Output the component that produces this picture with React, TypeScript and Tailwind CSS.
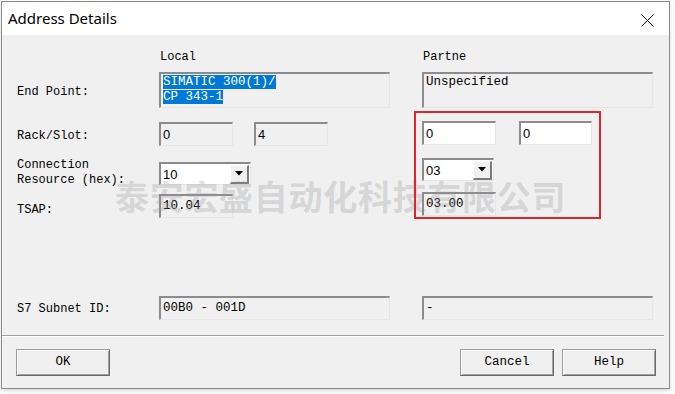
import React from "react";

const mono = { fontFamily: '"Liberation Mono", "DejaVu Sans Mono", monospace' };
const sans = { fontFamily: '"Liberation Sans", Arial, sans-serif' };

function Sunken({
  className = "",
  white = false,
  children,
}: {
  className?: string;
  white?: boolean;
  children?: React.ReactNode;
}) {
  return (
    <div
      className={`box-border border-t-2 border-l-2 border-b border-r border-t-[#8c8c8c] border-l-[#8c8c8c] border-b-[#e6e6e6] border-r-[#e6e6e6] ${
        white ? "bg-white" : "bg-[#f0f0f0]"
      } ${className}`}
    >
      {children}
    </div>
  );
}

function Combo({ value, width }: { value: string; width: string }) {
  return (
    <Sunken white className={`${width} h-[23px] flex items-center justify-between pr-[1px]`}>
      <span className="pl-[2px] text-[13px] text-black leading-none" style={sans}>
        {value}
      </span>
      <div className="w-[19px] h-[19px] bg-[#f0f0f0] box-border border-t border-l border-white border-b-2 border-r-2 border-b-[#7a7a7a] border-r-[#7a7a7a] flex items-center justify-center">
        <svg width="8" height="5" viewBox="0 0 8 5">
          <polygon points="0,0 8,0 4,4.5" fill="#000" />
        </svg>
      </div>
    </Sunken>
  );
}

function Btn({ label }: { label: string }) {
  return (
    <div className="w-[94px] h-[27px] box-border bg-[#f0f0f0] border border-t-[#9a9a9a] border-l-[#9a9a9a] border-b-[#6a6a6a] border-r-[#6a6a6a] flex items-center justify-center shadow-[inset_1px_1px_0_#ffffff,inset_-1px_-1px_0_#a0a0a0]">
      <span className="text-[12.5px] text-black" style={mono}>
        {label}
      </span>
    </div>
  );
}

export default function App() {
  return (
    <div className="w-[675px] h-[394px] bg-white relative overflow-hidden">
      <div className="absolute left-[1px] top-[1px] w-[669px] h-[388px] border border-[#8a8a8a] bg-[#f0f0f0] shadow-[0_2px_4px_rgba(0,0,0,0.15)] flex flex-col">
        {/* title bar */}
        <div className="h-[33px] bg-white flex items-center justify-between pl-[6px] pr-[15px] shrink-0">
          <span
            className="text-[15px] text-black leading-none"
            style={{ fontFamily: '"Noto Sans", "Open Sans", sans-serif' }}
          >
            Address Details
          </span>
          <svg width="13" height="13" viewBox="0 0 13 13" className="mt-[4px]">
            <path d="M0.5 0.5 L12.5 12.5 M12.5 0.5 L0.5 12.5" stroke="#111" strokeWidth="1" />
          </svg>
        </div>

        {/* body */}
        <div className="flex flex-col pl-[15px] text-black" style={mono}>
          {/* header */}
          <div className="mt-[15px] h-[14px] flex text-[12px] leading-[14px]">
            <div className="w-[143px]" />
            <div className="w-[263px]">Local</div>
            <div>Partne</div>
          </div>

          {/* End point */}
          <div className="mt-[8px] h-[36px] flex items-center">
            <div className="w-[142px] text-[12px] pt-[3px]">End Point:</div>
            <Sunken className="w-[231px] h-[36px] pl-[2px] pt-[1px]">
              <div className="text-[12.5px] leading-[15px]">
                <span className="bg-[#0078d7] text-white">SIMATIC 300(1)/</span>
                <br />
                <span className="bg-[#0078d7] text-white">CP 343-1</span>
              </div>
            </Sunken>
            <div className="w-[32px]" />
            <Sunken className="w-[231px] h-[36px] pl-[2px] pt-[1px]">
              <div className="text-[12.5px] leading-[15px]">Unspecified</div>
            </Sunken>
          </div>

          {/* Rack/Slot */}
          <div className="mt-[14px] h-[24px] flex items-center">
            <div className="w-[142px] text-[12px] pt-[3px]">Rack/Slot:</div>
            <Sunken className="w-[74px] h-[24px] pl-[2px] flex items-center text-[13px]">
              <span style={sans}>0</span>
            </Sunken>
            <div className="w-[21px]" />
            <Sunken className="w-[74px] h-[24px] pl-[2px] flex items-center text-[13px]">
              <span style={sans}>4</span>
            </Sunken>
            <div className="w-[94px]" />
            <Sunken white className="w-[74px] h-[24px] pl-[2px] flex items-center text-[13px] -mt-[2px]">
              <span style={sans}>0</span>
            </Sunken>
            <div className="w-[23px]" />
            <Sunken white className="w-[73px] h-[24px] pl-[2px] flex items-center text-[13px] -mt-[2px]">
              <span style={sans}>0</span>
            </Sunken>
          </div>

          {/* Connection resource */}
          <div className="mt-[12px] h-[28px] flex items-start">
            <div className="w-[142px] text-[12px] leading-[15px]">
              Connection
              <br />
              Resource (hex):
            </div>
            <div className="mt-[4px]">
              <Combo value="10" width="w-[92px]" />
            </div>
            <div className="w-[171px]" />
            <Combo value="03" width="w-[72px]" />
          </div>

          {/* TSAP */}
          <div className="mt-[6px] h-[26px] flex items-start">
            <div className="w-[142px] text-[12px] pt-[9px]">TSAP:</div>
            <Sunken className="mt-[2px] w-[74px] h-[24px] pl-[2px] flex items-center">
              <span className="text-[12.5px]">10.04</span>
            </Sunken>
            <div className="w-[189px]" />
            <Sunken className="w-[74px] h-[24px] pl-[2px] flex items-center">
              <span className="text-[12.5px]">03.00</span>
            </Sunken>
          </div>

          {/* S7 Subnet */}
          <div className="mt-[78px] h-[24px] flex items-center">
            <div className="w-[142px] text-[12px] pt-[2px]">S7 Subnet ID:</div>
            <Sunken className="w-[231px] h-[24px] pl-[2px] flex items-center">
              <span className="text-[12.5px]">00B0 - 001D</span>
            </Sunken>
            <div className="w-[32px]" />
            <Sunken className="w-[231px] h-[24px] pl-[2px] flex items-center">
              <span className="text-[12.5px]">-</span>
            </Sunken>
          </div>
        </div>

        {/* separator */}
        <div className="mt-[15px] w-[662px] border-t border-t-[#a0a0a0] border-b border-b-white" />

        {/* buttons */}
        <div className="mt-[12px] pl-[14px] pr-[13px] flex items-center">
          <Btn label="OK" />
          <div className="flex-1" />
          <Btn label="Cancel" />
          <div className="w-[8px]" />
          <Btn label="Help" />
        </div>
      </div>

      {/* watermark */}
      <div
        className="absolute left-[115px] top-[179px] text-[34px] font-bold leading-none whitespace-nowrap text-[rgba(150,150,150,0.3)] tracking-[0.7px] pointer-events-none"
        style={{ fontFamily: '"Noto Sans CJK SC", sans-serif' }}
      >
        泰安宏盛自动化科技有限公司
      </div>

      {/* red annotation box */}
      <div className="absolute left-[414px] top-[111px] w-[187px] h-[108px] border-2 border-[#e0242c] pointer-events-none" />
    </div>
  );
}
